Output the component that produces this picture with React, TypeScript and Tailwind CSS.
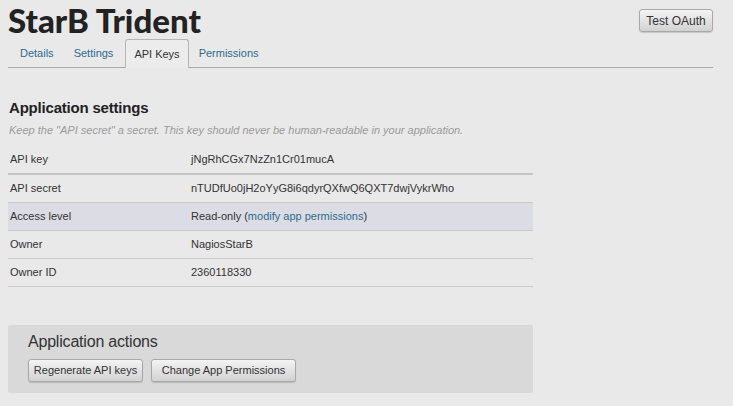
import React from "react";

const rows: { label: string; value: React.ReactNode; highlight?: boolean; thick?: boolean }[] = [
   { label: "API key", value: "jNgRhCGx7NzZn1Cr01mucA", thick: true },
   { label: "API secret", value: "nTUDfUo0jH2oYyG8i6qdyrQXfwQ6QXT7dwjVykrWho" },
   {
      label: "Access level",
      value: (
         <>
            Read-only (
            <a href="#" className="text-[#2b6c8f]">
               modify app permissions
            </a>
            )
         </>
      ),
      highlight: true,
   },
   { label: "Owner", value: "NagiosStarB" },
   { label: "Owner ID", value: "2360118330" },
];

const tabs = ["Details", "Settings", "API Keys", "Permissions"];

const btn =
   "h-[23px] whitespace-nowrap rounded-[3px] border border-[#a8a8a8] bg-gradient-to-b from-[#f4f4f4] to-[#d2d2d2] text-[11px] text-[#333] shadow-[0_1px_1px_rgba(0,0,0,0.15)]";

const App = () => {
   return (
      <div className="min-h-[406px] w-[733px] bg-[#e9e9e9] px-2 font-['Liberation_Sans',Arial,sans-serif] text-[11px] text-[#333]">
         <div className="flex h-[36px] items-start justify-between">
            <h1 className="font-['Lato',sans-serif] text-[33px] font-black leading-[40px] text-[#222]">
               StarB Trident
            </h1>
            <button className={`${btn} mt-[9px] mr-[12px] w-[74px] text-[12px]`}>Test OAuth</button>
         </div>

         <div className="mt-[3px] flex h-[29px] items-end border-b border-[#aaaaaa] mr-[12px] pl-[2px]">
            {tabs.map((t) =>
               t === "API Keys" ? (
                  <div
                     key={t}
                     className="-mb-px ml-[2px] flex h-[29px] items-center rounded-t-[3px] border border-b-0 border-[#b5b5b5] bg-[#ececec] px-[8px] text-[#333]"
                  >
                     {t}
                  </div>
               ) : (
                  <div key={t} className="flex h-[28px] items-center px-[10px] text-[#2b6c8f]">
                     {t}
                  </div>
               )
            )}
         </div>

         <h2 className="mt-[31px] text-[15px] font-bold leading-[18px] tracking-[-0.2px] text-[#222] pl-[1px]">
            Application settings
         </h2>
         <p className="mt-[5px] text-[11px] italic text-[#9a9a9a] pl-[1px]">
            Keep the "API secret" a secret. This key should never be human-readable in your application.
         </p>

         <div className="mt-[8px] w-[525px]">
            {rows.map((r) => (
               <div
                  key={r.label}
                  className={`flex h-[28px] items-center ${
                     r.thick ? "border-b-2 border-[#c4c4c4]" : "border-b border-[#c9c9c9]"
                  } ${r.highlight ? "bg-[#dcdce4]" : ""}`}
               >
                  <div className="w-[183px] pl-[2px]">{r.label}</div>
                  <div>{r.value}</div>
               </div>
            ))}
         </div>

         <div className="mt-[38px] w-[525px] rounded-[2px] bg-[#d9d9d9] px-[20px] pt-[7px] pb-[11px]">
            <h3 className="text-[16px] leading-[20px] tracking-[-0.2px] text-[#333]">Application actions</h3>
            <div className="mt-[7px] flex gap-[8px]">
               <button className={`${btn} w-[115px]`}>Regenerate API keys</button>
               <button className={`${btn} w-[145px]`}>Change App Permissions</button>
            </div>
         </div>
      </div>
   );
};

export default App;
